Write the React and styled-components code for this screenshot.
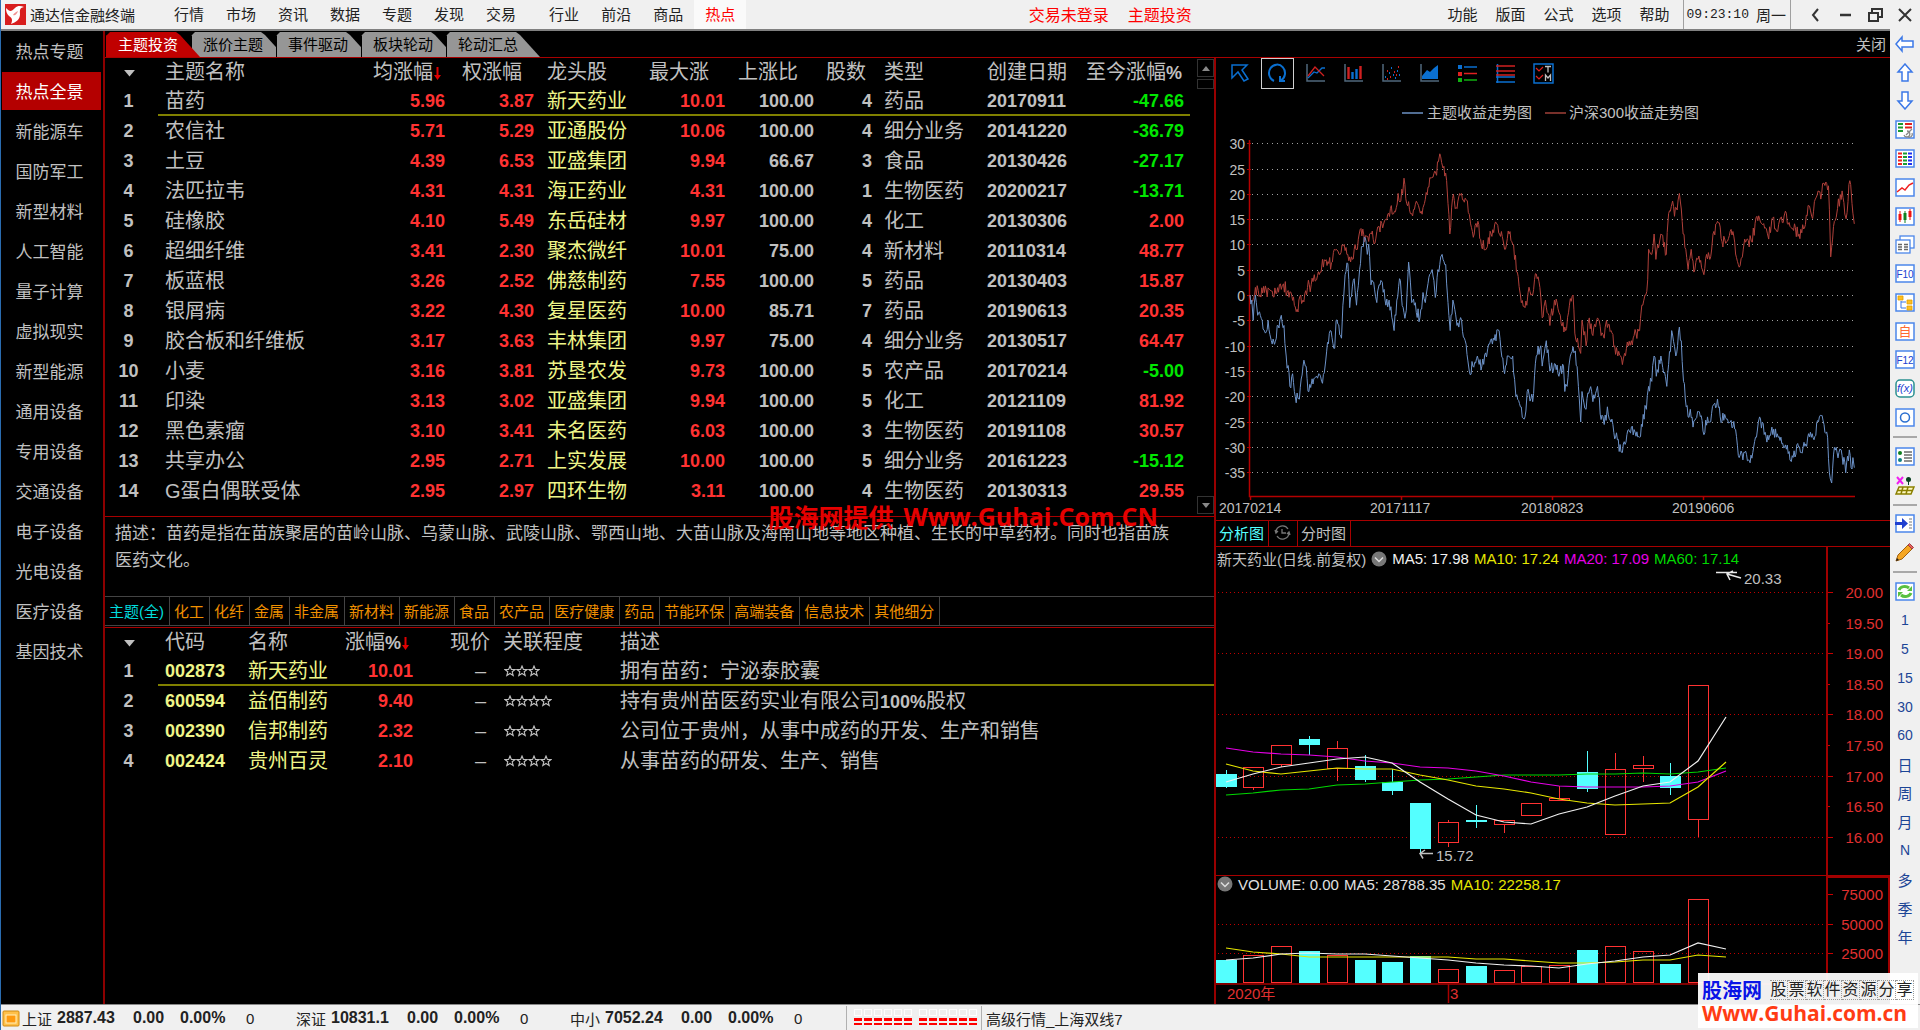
import React from "react";
import styled, { createGlobalStyle } from "styled-components";

const c = {
  bar: "#f0f0f0",
  text: "#c0c0c0",
  line: "#a80000",
  up: "#ff3232",
  down: "#00e600",
  name: "#eef588",
  cyan: "#54ffff",
  blue: "#3b78e7",
  navy: "#1c4596",
};

const sans = `"Liberation Sans", "Noto Sans CJK SC", sans-serif`;

const GlobalStyle = createGlobalStyle`
  *, *::before, *::after { box-sizing: border-box; }
  body { margin: 0; background: #000; font-family: ${sans}; }
  button { font-family: inherit; border: 0; padding: 0; margin: 0; background: none; cursor: pointer; white-space: nowrap; }
  svg { display: block; }
  svg text { font-family: ${sans}; }
`;

const Page = styled.div`
  position: relative;
  display: flex;
  flex-direction: column;
  min-height: 100vh;
  border-left: 1px solid #2a6cb0;
  color: ${c.text};
`;

/* ---------- title bar ---------- */
const TitleBar = styled.header`
  display: flex;
  align-items: stretch;
  height: 29px;
  background: ${c.bar};
  color: #222;
  font-size: 15px;
`;
const Brand = styled.div`
  display: flex;
  align-items: center;
  gap: 4px;
  width: 162px;
  padding-left: 4px;
`;
const Menu = styled.nav`
  display: flex;
  margin-left: ${(p) => (p.$gap ? "11px" : "0")};
`;
const MenuItem = styled.button`
  padding: 0 ${(p) => (p.$tight ? 9 : 11)}px 2px;
  font-size: 15px;
  color: ${(p) => (p.$active ? "#ff0000" : "#222")};
  background: ${(p) => (p.$active ? "#fafafa" : "transparent")};
`;
const Notices = styled.div`
  flex: 1;
  display: flex;
  justify-content: center;
  align-items: center;
  gap: 19px;
  padding: 0 0 2px 36px;
`;
const Notice = styled.a`
  color: #ff0000;
  font-size: 16px;
  text-decoration: none;
`;
const Clock = styled.time`
  display: flex;
  align-items: center;
  gap: 7px;
  margin: 0 9px 0 4px;
  padding: 0 4px 0 3px;
  border-left: 1px solid #a0a0a0;
  border-right: 1px solid #a0a0a0;
  span { font: 13px "Liberation Mono", monospace; }
`;
const WinButton = styled.button`
  width: 30px;
  display: grid;
  place-items: center;
`;

/* ---------- body ---------- */
const Body = styled.div`
  flex: 1;
  display: flex;
`;
const Dark = styled.main`
  flex: 1;
  min-width: 0;
  display: flex;
  background: #000;
  border-top: 2px solid #808080;
`;
const SideNav = styled.nav`
  width: 104px;
  display: flex;
  flex-direction: column;
  border-right: 2px solid #8c0000;
`;
const SideItem = styled.button`
  height: 38px;
  margin: 1px 2px 1px 1px;
  padding: 0 4px 2px 0;
  font-size: 17px;
  color: ${(p) => (p.$active ? "#fff" : c.text)};
  background: ${(p) => (p.$active ? "#b40000" : "transparent")};
`;
const Content = styled.div`
  flex: 1;
  min-width: 0;
  display: flex;
  flex-direction: column;
`;
const TabRow = styled.div`
  display: flex;
  align-items: flex-end;
  height: 27px;
  padding-left: 1px;
  border-bottom: 1px solid ${c.line};
`;
const Tab = styled.button`
  position: relative;
  z-index: ${(p) => (p.$active ? 1 : 0)};
  width: 94px;
  height: 25px;
  margin-right: -9px;
  padding: 0 0 2px 11px;
  text-align: left;
  font-size: 15px;
  color: ${(p) => (p.$active ? "#fff" : "#000")};
  background: ${(p) => (p.$active ? "#c00000" : "#969696")};
  border-left: 1px solid ${(p) => (p.$active ? "#c00000" : "#000")};
  clip-path: polygon(0 4px, 4px 0, 70px 0, 74px 3px, 94px 100%, 0 100%);
`;
const CloseButton = styled.button`
  margin-left: auto;
  align-self: center;
  padding: 0 4px 2px 0;
  font-size: 15px;
  color: ${c.text};
`;
const Split = styled.div`
  flex: 1;
  display: grid;
  grid-template-columns: minmax(0, 1fr) 676px;
`;
const LeftPane = styled.section`
  display: flex;
  flex-direction: column;
`;
const ThemePanel = styled.div`
  display: flex;
  height: 458px;
`;
const TableWrap = styled.div`
  flex: 1;
  min-width: 0;
  padding-right: 7px;
`;
const Scroll = styled.div`
  width: 17px;
  display: flex;
  flex-direction: column;
  padding: 1px 0 2px;
`;
const ScrollButton = styled.button`
  height: 18px;
  border: 1px solid #333;
  color: #777;
  display: grid;
  place-items: center;
  &:last-child { margin-top: auto; }
`;
const Thumb = styled.div`
  height: 10px;
  margin-top: 2px;
  border: 1px solid #333;
`;

const Table = styled.table`
  width: 100%;
  table-layout: fixed;
  border-collapse: separate;
  border-spacing: 0;
  line-height: 20px;
`;
const Cell = styled.td`
  height: 30px;
  padding: ${(p) => p.$pad || "0"};
  text-align: ${(p) => p.$align || "left"};
  font-size: ${(p) => (p.$num ? 18 : 20)}px;
  font-weight: ${(p) => (p.$num ? 700 : 400)};
  color: ${(p) => p.$color || c.text};
  white-space: nowrap;
  box-shadow: ${(p) => (p.$line ? "inset 0 -2px #808000" : "none")};
`;
const Head = styled(Cell).attrs({ as: "th", scope: "col" })`
  height: 28px;
  font-weight: 400;
  b { font-size: 18px; }
`;
const Strong = styled.b`
  font-size: 18px;
`;
const Mark = styled.span`
  display: inline-block;
  vertical-align: middle;
`;
const SortMark = styled(Mark)`
  padding: 0 4px 0 1px;
  svg { width: 7px; height: 15px; }
`;
const Stars = styled.span`
  display: flex;
  svg { width: 12px; height: 12px; }
`;

const Description = styled.p`
  margin: 0;
  height: 80px;
  padding: 3px 40px 0 10px;
  border-top: 1px solid ${c.line};
  font-size: 17px;
  line-height: 27px;
`;
const Filters = styled.div`
  display: flex;
  height: 30px;
  margin-bottom: 1px;
  border: solid #444;
  border-width: 1px 0;
`;
const Filter = styled.button`
  padding: 0 5px 2px 4px;
  border-right: 1px solid #444;
  font-size: 15px;
  color: ${(p) => (p.$active ? "#00dcdc" : "#f09000")};
`;
const StockPanel = styled.div`
  flex: 1;
  border-top: 1px solid ${c.line};
`;

/* ---------- right pane ---------- */
const RightPane = styled.section`
  display: flex;
  flex-direction: column;
  border-left: 2px solid #980000;
`;
const ChartTools = styled.div`
  display: flex;
  gap: 5px;
  height: 32px;
  padding-left: 7px;
`;
const ToolButton = styled.button`
  width: 33px;
  height: 31px;
  display: grid;
  place-items: center;
  border: ${(p) => (p.$active ? "1px solid #d0d0d0" : "0")};
`;
const Canvas = styled.svg`
  width: 100%;
  overflow: visible;
`;
const SubTabs = styled.div`
  display: flex;
  height: 27px;
  border: solid ${c.line};
  border-width: 1px 0;
`;
const SubTab = styled.button`
  padding: 0 4px 2px 3px;
  font-size: 15px;
  border-right: 1px solid ${c.line};
  color: ${(p) => (p.$active ? c.cyan : c.text)};
`;
const IconTab = styled(SubTab)`
  width: 29px;
  display: grid;
  place-items: center;
`;
const LegendRow = styled.div`
  display: flex;
  height: ${(p) => (p.$low ? 17 : 23)}px;
  border-top: ${(p) => (p.$low ? `1px solid ${c.line}` : "0")};
`;
const Legend = styled.div`
  flex: 1;
  display: flex;
  align-items: center;
  gap: 5px;
  padding-left: 1px;
  border-right: 2px solid #a00000;
  font-size: 15px;
  white-space: nowrap;
`;
const AxisGap = styled.div`
  width: 62px;
  border-top: ${(p) => (p.$box ? "2px solid #a00000" : "0")};
`;
const Tint = styled.span`
  color: ${(p) => p.$color};
`;

/* ---------- right toolbar ---------- */
const Rail = styled.aside`
  width: 30px;
  background: ${c.bar};
`;
const RailItems = styled.div`
  display: flex;
  flex-direction: column;
  height: 922px;
`;
const RailButton = styled.button`
  flex: 1;
  display: grid;
  place-items: center;
  font-size: ${(p) => (p.$cjk ? 15 : 14)}px;
  color: ${c.navy};
`;
const Divider = styled.hr`
  width: 24px;
  margin: 4px 3px;
  border: 0;
  border-top: 2px solid #a8a8a8;
`;

/* ---------- status bar ---------- */
const Status = styled.footer`
  display: flex;
  align-items: center;
  height: 26px;
  padding-top: 1px;
  border-top: 1px solid #888;
  background: ${c.bar};
  color: #222;
  font-size: 15px;
`;
const IndexGroup = styled.div`
  display: grid;
  grid-template-columns: 35px 76px 47px 66px 50px;
  align-items: center;
  b { font-size: 16px; }
`;
const Meter = styled.div`
  display: flex;
  gap: 7px;
  height: 24px;
  margin-left: 2px;
  padding: 3px 4px 3px 7px;
  border: solid #b0b0b0;
  border-width: 0 1px;
`;
const MeterHalf = styled.div`
  display: grid;
  grid-template-columns: repeat(6, 8px);
  grid-template-rows: 7px 7px;
  gap: 2px;
`;
const MeterCell = styled.i`
  border: solid ${(p) => (p.$on ? "#ff0000" : "#fff")};
  border-width: ${(p) => (p.$on ? "3px 0 2px" : "1px")};
`;

/* ---------- promo overlays ---------- */
const CenterMark = styled.div`
  position: absolute;
  left: 40%;
  top: 498px;
  display: flex;
  align-items: center;
  gap: 10px;
  font: 700 25px "Open Sans", "Noto Sans CJK SC", sans-serif;
  color: #e60000;
  white-space: nowrap;
`;
const CornerMark = styled.div`
  position: absolute;
  right: 2px;
  bottom: 2px;
  width: 220px;
  padding: 4px;
  background: rgba(255, 255, 255, 0.94);
  white-space: nowrap;
`;
const MarkTop = styled.div`
  display: flex;
  align-items: center;
  justify-content: space-between;
  height: 25px;
  b { font-size: 20px; color: #0a14e6; }
`;
const Boxes = styled.span`
  display: flex;
  span {
    width: 18px;
    height: 20px;
    line-height: 17px;
    text-align: center;
    border: 1px dotted #999;
    border-left-width: 0;
    font-size: 16px;
    color: #222;
  }
`;
const MarkUrl = styled.div`
  font: 700 21px/22px "Open Sans", sans-serif;
  color: #ff3c14;
`;

/* ---------- data ---------- */
const themes = [
  ["苗药", "5.96", "3.87", "新天药业", "10.01", "100.00", "4", "药品", "20170911", "-47.66"],
  ["农信社", "5.71", "5.29", "亚通股份", "10.06", "100.00", "4", "细分业务", "20141220", "-36.79"],
  ["土豆", "4.39", "6.53", "亚盛集团", "9.94", "66.67", "3", "食品", "20130426", "-27.17"],
  ["法匹拉韦", "4.31", "4.31", "海正药业", "4.31", "100.00", "1", "生物医药", "20200217", "-13.71"],
  ["硅橡胶", "4.10", "5.49", "东岳硅材", "9.97", "100.00", "4", "化工", "20130306", "2.00"],
  ["超细纤维", "3.41", "2.30", "聚杰微纤", "10.01", "75.00", "4", "新材料", "20110314", "48.77"],
  ["板蓝根", "3.26", "2.52", "佛慈制药", "7.55", "100.00", "5", "药品", "20130403", "15.87"],
  ["银屑病", "3.22", "4.30", "复星医药", "10.00", "85.71", "7", "药品", "20190613", "20.35"],
  ["胶合板和纤维板", "3.17", "3.63", "丰林集团", "9.97", "75.00", "4", "细分业务", "20130517", "64.47"],
  ["小麦", "3.16", "3.81", "苏垦农发", "9.73", "100.00", "5", "农产品", "20170214", "-5.00"],
  ["印染", "3.13", "3.02", "亚盛集团", "9.94", "100.00", "5", "化工", "20121109", "81.92"],
  ["黑色素瘤", "3.10", "3.41", "未名医药", "6.03", "100.00", "3", "生物医药", "20191108", "30.57"],
  ["共享办公", "2.95", "2.71", "上实发展", "10.00", "100.00", "5", "细分业务", "20161223", "-15.12"],
  ["G蛋白偶联受体", "2.95", "2.97", "四环生物", "3.11", "100.00", "4", "生物医药", "20130313", "29.55"],
];
const stocks = [
  ["002873", "新天药业", "10.01", 3, "拥有苗药：宁泌泰胶囊"],
  ["600594", "益佰制药", "9.40", 4, <>持有贵州苗医药实业有限公司<Strong>100%</Strong>股权</>],
  ["002390", "信邦制药", "2.32", 3, "公司位于贵州，从事中成药的开发、生产和销售"],
  ["002424", "贵州百灵", "2.10", 4, "从事苗药的研发、生产、销售"],
];
const sideItems = ["热点专题", "热点全景", "新能源车", "国防军工", "新型材料", "人工智能", "量子计算", "虚拟现实", "新型能源", "通用设备", "专用设备", "交通设备", "电子设备", "光电设备", "医疗设备", "基因技术"];
const filters = ["主题(全)", "化工", "化纤", "金属", "非金属", "新材料", "新能源", "食品", "农产品", "医疗健康", "药品", "节能环保", "高端装备", "信息技术", "其他细分"];

const hs300 = [0,0,8,-0.5,12,1.5,22,0,32,0.5,47,0.8,57,0.3,67,2.2,74,2.2,82,0.5,92,0,104,-2.8,112,0,117,-1,127,1.5,135,2,142,4,147,3,155,4.5,160,7,170,5.8,182,6.5,190,9,197,8,206,9.7,214,8,222,6.5,230,9,237,9,241,12,260,11.5,278,11.2,285,13.5,302,14.8,310,17,317,16,327,20,333,18.5,340,23,346,18,357,16,370,18,378,16.5,385,18,400,23,410,24,419,27.8,426,25,432,24,437,18,441,12,447,19,457,17,467,20,480,18.5,487,14,495,12,503,14.5,511,9.5,524,9.5,532,12,545,14,555,12.5,562,9,572,12,580,10,590,4.5,597,0,607,-2.5,614,0.5,624,0,630,4.2,640,1.5,645,-4.5,652,-1,662,-6,672,-1,685,-4,697,-7,705,-2,713,0,717,-7.5,730,-11.5,733,-5,742,-10,749,-4.5,757,-8,767,-4.5,775,-8,782,-8.5,787,-5,797,-7,805,-10,812,-12,822,-13.7,827,-11.5,842,-9,852,-7.5,860,-7,865,-2,872,0,878,3,880,9,887,8,892,12,896,7,907,12,919,8,924,16,933,18.5,937,15.5,948,20,954,14.5,962,9,967,5,974,9,980,4.5,989,7,1002,4,1008,8,1015,7,1022,12,1032,14.5,1042,10.5,1052,10.5,1066,12.5,1078,6,1087,7.5,1092,11,1107,10.5,1119,15.5,1130,14,1145,11,1152,15,1163,12.5,1182,16.5,1192,13.5,1212,12,1222,13,1235,17.5,1240,15.5,1254,20.5,1262,20,1267,22,1277,21.5,1282,7.5,1290,14.5,1297,17,1307,20.5,1316,15,1324,22.5,1329,18,1334,14];
const theme = [0,0,4,-1,7,-5,12,0,17,-4,27,-5,34,-7.5,40,-5,47,-9,54,-9.7,62,-6,69,-4,75,-6,80,-12,88,-18,94,-15.5,100,-20,109,-20.5,117,-14,122,-14,130,-19,137,-16.5,152,-15.5,158,-17,167,-13,177,-7,187,-10.5,190,-5,202,-8.5,205,-2,210,4,216,6.2,220,-2.5,230,3.2,235,-2,242,5,246,9.5,250,9.5,254,11.3,259,8,262,10,267,2,275,1,280,-1.5,285,2,292,2.5,300,-2,307,-1,318,-7,324,-1,330,3.2,340,-3.5,345,-3,350,6.5,357,-1.5,363,-2,375,-4.5,382,0.5,387,-1.5,395,3.5,402,5,409,-0.5,415,5,424,8,432,6,437,-1.5,442,-7,448,-1,457,-6,467,-5,475,-9,484,-15,492,-14,502,-12,512,-14,525,-10.5,537,-8.5,550,-7,562,-15.5,570,-12,580,-12,587,-20,597,-22,607,-24,612,-19,624,-21,632,-12,642,-10,645,-14,654,-9,662,-15,672,-13.5,682,-16,692,-14,695,-19,700,-18,707,-12,718,-11,725,-18,730,-25,733,-19,742,-22.5,750,-18.5,757,-21,767,-18,775,-24.5,782,-25.5,789,-22,797,-25,807,-28,822,-31,832,-27.5,842,-26,850,-27,860,-28,868,-23.5,875,-22.5,880,-18,887,-17,892,-12,897,-16,907,-12,920,-18,931,-7,940,-12,948,-6.3,952,-9,957,-17,963,-22,967,-24,972,-22.5,978,-26,992,-23,1002,-27.5,1010,-24,1015,-25,1024,-21.5,1032,-20.5,1038,-24,1048,-23.5,1060,-25,1072,-26.5,1080,-32,1090,-31,1100,-32.5,1110,-31,1118,-28,1125,-24,1137,-27,1145,-28.5,1152,-26,1162,-28,1172,-28,1182,-29.5,1195,-32.8,1207,-29.5,1217,-31,1237,-27,1245,-28.5,1257,-24,1267,-25.5,1275,-28,1279,-35,1284,-37,1290,-30,1300,-31,1305,-30.5,1315,-35,1323,-30.5,1327,-34,1331,-32,1334,-34];

/* daily points between the turning points, with a small repeatable wobble */
function daily(series, seed) {
  const pts = [];
  let s = seed;
  for (let i = 0; i + 3 < series.length; i += 2) {
    const [t0, v0, t1, v1] = series.slice(i, i + 4);
    pts.push([t0, v0]);
    for (let t = t0 + 2; t < t1 - 1; t += 2) {
      s = (s * 16807) % 2147483647;
      const wobble = (s / 2147483647 - 0.5) * 2.6;
      pts.push([t, v0 + ((v1 - v0) * (t - t0)) / (t1 - t0) + wobble]);
    }
  }
  pts.push(series.slice(-2));
  return pts.map(([t, v]) => `${(34 + t * 0.453).toFixed(1)},${(205 - v * 5.08).toFixed(1)}`).join(" ");
}

function IncomeChart() {
  const levels = [30, 25, 20, 15, 10, 5, 0, -5, -10, -15, -20, -25, -30, -35];
  const dates = ["20170214", "20171117", "20180823", "20190606"];
  return (
    <Canvas viewBox="0 0 674 430" role="img" aria-label="主题收益走势图">
      <path d="M186 23h21" stroke="#6c92c4" strokeWidth="1.5" />
      <text x="211" y="28" fontSize="15" fill={c.text}>主题收益走势图</text>
      <path d="M329 23h21" stroke="#a04038" strokeWidth="1.5" />
      <text x="353" y="28" fontSize="15" fill={c.text}>沪深300收益走势图</text>
      {levels.map((v) => {
        const y = Math.round(205 - v * 5.06) + 0.5;
        return (
          <g key={v}>
            <path d={`M36 ${y}H637`} stroke="#a0a0a0" strokeDasharray="1 4" />
            <path d={`M31 ${y}h4`} stroke={c.line} />
            <text x="29" y={y + 5} fontSize="14" textAnchor="end" fill={c.text}>{v}</text>
          </g>
        );
      })}
      <path d="M33.5 50V406.5H639" fill="none" stroke="#b40000" strokeWidth="1.5" />
      {dates.map((d, i) => (
        <g key={d}>
          <path d={`M${34.5 + i * 151} 406v4`} stroke="#b40000" strokeWidth="1.5" />
          <text x={3 + i * 151} y="423" fontSize="14" fill={c.text}>{d}</text>
        </g>
      ))}
      <polyline points={daily(hs300, 77)} fill="none" stroke="#b0403a" strokeWidth="1" />
      <polyline points={daily(theme, 501)} fill="none" stroke="#6c92c8" strokeWidth="1" />
    </Canvas>
  );
}

/* direction, body top, body bottom, wick top, wick bottom, volume bar top */
const candles = [
  ["d", 204, 217, 200, 218, 68], ["u", 197, 217, 197, 220, 63], ["u", 175, 194, 175, 197, 54],
  ["d", 169, 175, 166, 185, 59], ["u", 178, 198, 171, 211, 63], ["d", 196, 210, 185, 212, 68],
  ["d", 212, 221, 199, 225, 70], ["d", 233, 279, 233, 283, 64], ["u", 252, 272, 250, 277, 77],
  ["d", 250, 252, 235, 258, 74], ["u", 250, 254, 250, 263, 78], ["u", 233, 245, 233, 245, 74],
  ["u", 228, 230, 216, 230, 73], ["d", 202, 219, 181, 222, 58], ["u", 199, 264, 183, 264, 54],
  ["u", 195, 198, 186, 212, 59], ["d", 206, 218, 193, 225, 72], ["u", 115, 249, 115, 267, 7],
];
const cx = (i) => Math.round(9.5 + i * 27.8);
const trend = (ys) => ys.map((y, i) => `${cx(i)},${y}`).join(" ");
const priceMa = [
  ["#00d800", [225, 223, 220, 219, 215, 214, 212, 210, 209, 207, 205, 205, 205, 204, 204, 203, 204, 202, 198]],
  ["#e600e6", [178, 182, 184, 185, 187, 191, 193, 197, 198, 201, 206, 212, 216, 217, 217, 217, 216, 212, 201]],
  ["#e6e600", [194, 201, 204, 201, 198, 199, 199, 205, 210, 216, 219, 223, 229, 233, 235, 234, 233, 217, 192]],
  ["#f0f0f0", [212, 204, 197, 193, 189, 187, 193, 212, 229, 245, 252, 254, 244, 237, 226, 216, 212, 191, 147]],
];
const volumeMa = [
  ["#e6e600", [56, 60, 62, 65, 65, 65, 65, 65, 65, 67, 67, 69, 71, 71, 70, 68, 68, 63, 65]],
  ["#f0f0f0", [68, 66, 62, 61, 62, 62, 64, 66, 68, 71, 73, 74, 76, 72, 69, 65, 63, 51, 57]],
];

function PriceChart() {
  const marks = ["20.00", "19.50", "19.00", "18.50", "18.00", "17.50", "17.00", "16.50", "16.00"];
  return (
    <Canvas viewBox="0 0 674 305" role="img" aria-label="新天药业日线">
      {marks.map((m, i) => {
        const y = Math.round(22 + i * 30.6) + 0.5;
        return (
          <g key={m}>
            {i % 2 === 0 && <path d={`M2 ${y}H610`} stroke="#c00000" strokeDasharray="1 3" />}
            <path d={`M611 ${y}h${i % 2 ? 3 : 6}`} stroke="#c80000" />
            <text x="667" y={y + 5} fontSize="15" textAnchor="end" fill="#e03030">{m}</text>
          </g>
        );
      })}
      <path d="M611 0V305" stroke="#a00000" strokeWidth="2" />
      {candles.map(([dir, top, bottom, high, low], i) =>
        dir === "d" ? (
          <g key={i}>
            <path d={`M${cx(i)}.5 ${high}V${low}`} stroke={c.cyan} />
            <rect x={cx(i) - 10} y={top} width="21" height={bottom - top} fill={c.cyan} />
          </g>
        ) : (
          <g key={i} fill="none" stroke={c.up}>
            <path d={`M${cx(i)}.5 ${high}V${top}M${cx(i)}.5 ${bottom}V${low}`} />
            <rect x={cx(i) - 9.5} y={top + 0.5} width="20" height={bottom - top} />
          </g>
        )
      )}
      {priceMa.map(([color, ys]) => (
        <polyline key={color} points={trend(ys)} fill="none" stroke={color} strokeWidth="1.2" />
      ))}
      <path d="M500 2.5H521M525 8l-14-4M517 1l-6 3 3 6" fill="none" stroke="#e8e8e8" strokeWidth="1.5" />
      <text x="528" y="14" fontSize="15" fill={c.text}>20.33</text>
      <path d="M204 283.5h13M209 280l-5 3.5 3 5" fill="none" stroke={c.text} strokeWidth="1.5" />
      <text x="220" y="291" fontSize="15" fill={c.text}>15.72</text>
    </Canvas>
  );
}

function VolumeChart() {
  return (
    <Canvas viewBox="0 0 674 111" role="img" aria-label="成交量">
      {[["75000", 2], ["50000", 32], ["25000", 61]].map(([m, y]) => (
        <g key={m}>
          {y > 10 && <path d={`M2 ${y}.5H610`} stroke="#c00000" strokeDasharray="1 3" />}
          <path d={`M611 ${y}.5h6`} stroke="#c80000" />
          <text x="667" y={y + 6} fontSize="15" textAnchor="end" fill="#e03030">{m}</text>
        </g>
      ))}
      <path d="M611 0V111" stroke="#a00000" strokeWidth="2" />
      <path d="M673 -16V92" stroke="#a00000" strokeWidth="2" />
      {candles.map(([dir, , , , , top], i) =>
        dir === "d" ? (
          <rect key={i} x={cx(i) - 10} y={top} width="21" height={91 - top} fill={c.cyan} />
        ) : (
          <rect key={i} x={cx(i) - 9.5} y={top + 0.5} width="20" height={90 - top} fill="none" stroke={c.up} />
        )
      )}
      {volumeMa.map(([color, ys]) => (
        <polyline key={color} points={trend(ys)} fill="none" stroke={color} strokeWidth="1.2" />
      ))}
      <path d="M0 92H674" stroke="#a80000" strokeWidth="1.5" />
      <path d="M232.5 92V111" stroke="#a80000" strokeWidth="1.5" />
      <text x="11" y="107" fontSize="15" fill="#e03030">2020年</text>
      <text x="234" y="107" fontSize="15" fill="#e03030">3</text>
    </Canvas>
  );
}

/* ---------- icons ---------- */
const Chevron = () => (
  <svg width="16" height="16" viewBox="0 0 16 16">
    <circle cx="8" cy="8" r="7.5" fill="#777" />
    <path d="M4 6.5l4 4 4-4" fill="none" stroke="#ddd" strokeWidth="1.5" />
  </svg>
);
const Star = () => (
  <svg viewBox="0 0 12 12">
    <path d="M6 1l1.4 3.4 3.6.1-2.8 2.3 1 3.7L6 8.5 2.800 10.5l1-3.700L1 4.5l3.600-.1z" fill="none" stroke={c.text} strokeWidth="1.1" />
  </svg>
);
const chartAxes = <path d="M2 1v17h18" fill="none" stroke="#50687c" strokeWidth="1.5" />;
const B = "#0a6fd0";
const toolIcons = [
  <path d="M3 2h15l-5 5 6 9-4 2-6-9-6 6z" fill="none" stroke={B} strokeWidth="1.5" />,
  <path d="M7 18a8 8.5 0 1 1 7-.5M18 18h-5v-5" fill="none" stroke={B} strokeWidth="2" />,
  <>{chartAxes}<path d="M3 15l6-6 3 1 5-5h3" fill="none" stroke={B} strokeWidth="1.3" /><path d="M3 13l7-9 9 9" fill="none" stroke="#d02020" strokeWidth="1.3" /></>,
  <>{chartAxes}<path d="M5.5 16V4M17.5 16V3" stroke="#d02020" strokeWidth="2.4" /><path d="M9.5 16V9M13.5 16V6" stroke={B} strokeWidth="2.4" /></>,
  <>{chartAxes}<path d="M4 14h1M8 10h1M12 12h1M16 8h1M10 5h1M14 15h1M18 12h1" stroke={B} strokeWidth="2" /><path d="M6 8h1M9 14h1M13 9h1M17 4h1M6 16h1M15 12h1" stroke="#d02020" strokeWidth="2" /></>,
  <>{chartAxes}<path d="M3 16v-3l5-6 3 2 4-4 4-3v14z" fill={B} /></>,
  <><path d="M7 4h13" stroke={B} strokeWidth="1.5" /><path d="M1 2h4v4H1z" fill={B} /><path d="M7 10.5h13" stroke="#e02020" strokeWidth="1.5" /><path d="M1 9h4v4H1z" fill="#e02020" /><path d="M7 17h13" stroke="#10b010" strokeWidth="1.5" /><path d="M1 15h4v4H1z" fill="#10b010" /></>,
  <><path d="M2.5 1v19M1 19h19M1 14h19" stroke={B} strokeWidth="1.5" /><path d="M1 3h19M1 8h19M1 12h19" stroke="#d02020" strokeWidth="1.5" /></>,
  <><path d="M1 1h19v19H1z" fill="none" stroke={B} strokeWidth="1.500" /><path d="M3 5l3 3 4-4M3 13l3 3 4-4" fill="none" stroke="#e02020" strokeWidth="1.2" /><path d="M12 3.500h6M15 3.500v6M12.500 18v-6l2.500 3 2.500-3v6" fill="none" stroke="#c0c0c0" strokeWidth="1.300" /></>,
];
const frame = <rect x="1" y="1" width="18" height="17" fill="#fff" stroke="#4b86ea" strokeWidth="1.5" />;
const label = (t, color, size) => (
  <text x="10" y="14" fontSize={size} textAnchor="middle" fill={color}>{t}</text>
);
const railIcons = [
  ["后退", <path d="M1 10l6-7v4h11v6H7v4z" fill="#fff" stroke={c.blue} strokeWidth="1.5" />],
  ["向上", <path d="M10 1l7 8h-4v9H7V9H3z" fill="#fff" stroke={c.blue} strokeWidth="1.5" />],
  ["向下", <path d="M10 18l7-8h-4V1H7v9H3z" fill="#fff" stroke={c.blue} strokeWidth="1.5" />],
  ["选股", <>{frame}<path d="M3 4h5M3 7.5h5M3 11h5" stroke="#1a9a30" strokeWidth="2" /><path d="M10 4h7M10 7.5h7" stroke="#e02020" strokeWidth="2" /><path d="M9 15a3 3 0 1 0 3-4M11 15l6-6M13 17a3 3 0 0 0 4-4" fill="none" stroke="#888" strokeWidth="1.3" /></>],
  ["报价", <>{frame}<path d="M3 4.5h4M3 8h4M3 11.5h4M3 15h4" stroke="#f02020" strokeWidth="2" /><path d="M8 4.5h4M8 8h4M8 11.5h4M8 15h4" stroke="#1a9a30" strokeWidth="2" /><path d="M13 4.5h4M13 8h4M13 11.5h4M13 15h4" stroke="#2030f0" strokeWidth="2" /></>],
  ["分时", <>{frame}<path d="M2 14l5-4 3 2 4-5 4-2" fill="none" stroke="#f02020" strokeWidth="1.5" /></>],
  ["K线", <>{frame}<path d="M5 4v11M15 2v11" stroke="#f01010" /><path d="M3.5 7h3v6h-3zM13.5 4h3v6h-3z" fill="#f01010" /><path d="M10 4v12" stroke="#108020" /><path d="M8.5 6h3v7h-3z" fill="#108020" /></>],
  ["多窗", <><rect x="5" y="1" width="14" height="12" fill="#fff" stroke="#4b86ea" strokeWidth="1.3" /><rect x="1" y="5" width="14" height="13" fill="#fff" stroke="#4b86ea" strokeWidth="1.3" /><path d="M3 9.5h4M9 9.5h4M3 12h4M9 12h4M3 14.5h4M9 14.5h4" stroke="#666" strokeWidth="1.3" /></>],
  ["F10", <>{frame}{label("F10", "#2040d0", 10)}</>],
  ["板块树", <>{frame}<path d="M3 3h5v4H3zM12 7h5v4h-5zM12 13h5v4h-5z" fill="#ffc020" stroke="#e0a000" strokeWidth=".8" /><path d="M6 8v7h5M6 9h5" fill="none" stroke="#3b78e7" /></>],
  ["自选", <>{frame}{label("自", "#ff6a30", 13)}</>],
  ["F12", <>{frame}{label("F12", "#2040d0", 10)}</>],
  ["公式", <><rect x="1" y="1" width="18" height="17" rx="4" fill="#fff" stroke="#2a9090" strokeWidth="1.5" /><text x="10" y="13" fontSize="11" fontStyle="italic" textAnchor="middle" fill="#2040d0">f(x)</text></>],
  ["刷新", <>{frame}<circle cx="10" cy="9.5" r="4.5" fill="none" stroke="#2a6fd0" strokeWidth="1.5" /></>],
  null,
  ["列表", <>{frame}<path d="M9 5h8M9 8h8M9 11h8M9 14h8" stroke="#222" strokeWidth="1.2" /><circle cx="5" cy="6" r="2" fill="#108020" /><circle cx="5" cy="13" r="2" fill="#108080" /></>],
  ["计算", <><path d="M2 1l6 7M8 1l-6 7" stroke="#f020f0" strokeWidth="2" /><circle cx="13.5" cy="3.5" r="2.5" fill="#084020" /><path d="M13.5 5v4" stroke="#084020" /><path d="M4 11h15l-3 7H1zM3 14.5h14M8 11l-2 7M13 11l-2 7" fill="#fff8c0" stroke="#8a8000" strokeWidth="1.5" /></>],
  null,
  ["跳转", <>{frame}<path d="M0 8h7V4l6 5.5-6 5.5v-4H0z" fill="#2040d0" /><path d="M14 5h3M14 8h3M14 11h3M14 14h3" stroke="#777" /></>],
  ["画线", <><path d="M1 18l2-6L13 2l4 4L7 16z" fill="#f5a623" stroke="#a06010" /><path d="M13 2l1.5-1.5 4 4L17 6z" fill="#e86060" stroke="#a04040" /><path d="M1 18l1-3 2 2z" fill="#222" /></>],
  null,
  ["循环", <>{frame}<path d="M4 8a6 5 0 0 1 10-2M16 11a6 5 0 0 1-10 2" fill="none" stroke="#58c040" strokeWidth="3" /><path d="M12 9h5V4zM8 10H3v5z" fill="#58c040" /></>],
];
const periods = ["1", "5", "15", "30", "60", "日", "周", "月", "N", "多", "季", "年"];

const signColor = (v) => (v.startsWith("-") ? c.down : c.up);
const Triangle = ({ up, size = 11, fill = c.text }) => (
  <svg width={size} height={size / 2 + 1} viewBox="0 0 10 6">
    <path d={up ? "M0 6l5-6 5 6z" : "M0 0h10L5 6z"} fill={fill} />
  </svg>
);
const SortDown = () => (
  <SortMark>
    <svg viewBox="0 0 7 15">
      <path d="M2.500 1h2v8H7L3.500 14 0 9h2.500z" fill="#e00000" />
    </svg>
  </SortMark>
);

function ThemeTable() {
  return (
    <Table>
      <colgroup>
        <col style={{ width: 53 }} /><col />
        {[73, 89, 106, 85, 89, 58, 103, 100, 115].map((w, i) => <col key={i} style={{ width: w }} />)}
      </colgroup>
      <thead>
        <tr>
          <Head $align="center" $pad="0 4px 0 0"><Mark><Triangle /></Mark></Head>
          <Head $pad="0 0 0 7px">主题名称</Head>
          <Head $align="right">均涨幅<SortDown /></Head>
          <Head $align="right" $pad="0 12px 0 0">权涨幅</Head>
          <Head $pad="0 0 0 13px">龙头股</Head>
          <Head $align="right" $pad="0 16px 0 0">最大涨</Head>
          <Head $align="right" $pad="0 16px 0 0">上涨比</Head>
          <Head $align="right" $pad="0 6px 0 0">股数</Head>
          <Head $pad="0 0 0 12px">类型</Head>
          <Head $pad="0 0 0 12px">创建日期</Head>
          <Head $align="right" $pad="0 8px 0 0">至今涨幅<b>%</b></Head>
        </tr>
      </thead>
      <tbody>
        {themes.map((r, i) => {
          const line = i === 0;
          return (
            <tr key={r[0]}>
              <Cell $num $align="center" $pad="0 6px 0 0">{i + 1}</Cell>
              <Cell $line={line} $pad="0 0 0 7px">{r[0]}</Cell>
              <Cell $line={line} $num $align="right" $color={c.up}>{r[1]}</Cell>
              <Cell $line={line} $num $align="right" $color={c.up}>{r[2]}</Cell>
              <Cell $line={line} $pad="0 0 0 13px" $color={c.name}>{r[3]}</Cell>
              <Cell $line={line} $num $align="right" $color={c.up}>{r[4]}</Cell>
              <Cell $line={line} $num $align="right">{r[5]}</Cell>
              <Cell $line={line} $num $align="right">{r[6]}</Cell>
              <Cell $line={line} $pad="0 0 0 12px">{r[7]}</Cell>
              <Cell $line={line} $num $pad="0 0 0 12px">{r[8]}</Cell>
              <Cell $line={line} $num $align="right" $pad="0 6px 0 0" $color={signColor(r[9])}>{r[9]}</Cell>
            </tr>
          );
        })}
      </tbody>
    </Table>
  );
}

function StockTable() {
  return (
    <Table>
      <colgroup>
        {[53, 83, 99, 73, 77, 123].map((w, i) => <col key={i} style={{ width: w }} />)}<col />
      </colgroup>
      <thead>
        <tr>
          <Head $align="center" $pad="0 4px 0 0"><Mark><Triangle /></Mark></Head>
          <Head $pad="0 0 0 7px">代码</Head>
          <Head $pad="0 0 0 7px">名称</Head>
          <Head $align="right">涨幅<b>%</b><SortDown /></Head>
          <Head $align="right">现价</Head>
          <Head $pad="0 0 0 13px">关联程度</Head>
          <Head $pad="0 0 0 7px">描述</Head>
        </tr>
      </thead>
      <tbody>
        {stocks.map(([code, name, pct, stars, desc], i) => {
          const line = i === 0;
          return (
            <tr key={code}>
              <Cell $num $align="center" $pad="0 6px 0 0">{i + 1}</Cell>
              <Cell $line={line} $num $pad="0 0 0 7px" $color={c.name}>{code}</Cell>
              <Cell $line={line} $pad="0 0 0 7px" $color={c.name}>{name}</Cell>
              <Cell $line={line} $num $align="right" $color={c.up}>{pct}</Cell>
              <Cell $line={line} $align="right" $pad="0 4px 0 0">–</Cell>
              <Cell $line={line} $pad="0 0 0 14px">
                <Stars>{Array.from({ length: stars }, (_, k) => <Star key={k} />)}</Stars>
              </Cell>
              <Cell $line={line} $pad="0 0 0 7px">{desc}</Cell>
            </tr>
          );
        })}
      </tbody>
    </Table>
  );
}

export default function App() {
  return (
    <Page>
      <GlobalStyle />
      <TitleBar>
        <Brand>
          <svg width="21" height="21" viewBox="0 0 21 21">
            <rect width="21" height="21" fill="#d81e1e" />
            <path d="M1 4c4 4 5 4 9 0 3-3 6-2 9-1-5 1-4 4-4 7 0 6-4 8-9 10 2-4 1-6-2-8C2 10 1 8 1 4z" fill="#fff" />
            <path d="M8 11c2 1 4-1 5-4-2 1-4 2-5 4z" fill="#f09090" />
          </svg>
          通达信金融终端
        </Brand>
        <Menu>
          {["行情", "市场", "资讯", "数据", "专题", "发现", "交易"].map((m) => <MenuItem key={m}>{m}</MenuItem>)}
        </Menu>
        <Menu $gap>
          {["行业", "前沿", "商品", "热点"].map((m) => <MenuItem key={m} $active={m === "热点"}>{m}</MenuItem>)}
        </Menu>
        <Notices>
          <Notice href="#login">交易未登录</Notice>
          <Notice href="#theme">主题投资</Notice>
        </Notices>
        <Menu>
          {["功能", "版面", "公式", "选项", "帮助"].map((m) => <MenuItem key={m} $tight>{m}</MenuItem>)}
        </Menu>
        <Clock><span>09:23:10</span>周一</Clock>
        <WinButton aria-label="返回"><svg width="16" height="16"><path d="M11 2L6 8l5 6" fill="none" stroke="#333" strokeWidth="2" /></svg></WinButton>
        <WinButton aria-label="最小化"><svg width="16" height="16"><path d="M3 8h11" stroke="#333" strokeWidth="2.5" /></svg></WinButton>
        <WinButton aria-label="还原"><svg width="16" height="16"><path d="M5 5V2h10v8h-4M2 6h9v8H2z" fill="none" stroke="#333" strokeWidth="2" /></svg></WinButton>
        <WinButton aria-label="退出"><svg width="16" height="16"><path d="M2 2l12 12M14 2L2 14" stroke="#333" strokeWidth="2" /></svg></WinButton>
      </TitleBar>

      <Body>
        <Dark>
          <SideNav>
            {sideItems.map((s) => <SideItem key={s} $active={s === "热点全景"}>{s}</SideItem>)}
          </SideNav>
          <Content>
            <TabRow>
              {["主题投资", "涨价主题", "事件驱动", "板块轮动", "轮动汇总"].map((t, i) => <Tab key={t} $active={i === 0}>{t}</Tab>)}
              <CloseButton>关闭</CloseButton>
            </TabRow>
            <Split>
              <LeftPane>
                <ThemePanel>
                  <TableWrap><ThemeTable /></TableWrap>
                  <Scroll>
                    <ScrollButton aria-label="上翻"><Triangle up size={8} fill="#888" /></ScrollButton>
                    <Thumb />
                    <ScrollButton aria-label="下翻"><Triangle size={8} fill="#888" /></ScrollButton>
                  </Scroll>
                </ThemePanel>
                <Description>
                  描述：苗药是指在苗族聚居的苗岭山脉、乌蒙山脉、武陵山脉、鄂西山地、大苗山脉及海南山地等地区种植、生长的中草药材。同时也指苗族医药文化。
                </Description>
                <Filters>
                  {filters.map((f, i) => <Filter key={f} $active={i === 0}>{f}</Filter>)}
                </Filters>
                <StockPanel><StockTable /></StockPanel>
              </LeftPane>

              <RightPane>
                <ChartTools>
                  {toolIcons.map((icon, i) => (
                    <ToolButton key={i} $active={i === 1} aria-label={`图表工具${i + 1}`}>
                      <svg width="21" height="21" viewBox="0 0 21 21">{icon}</svg>
                    </ToolButton>
                  ))}
                </ChartTools>
                <IncomeChart />
                <SubTabs>
                  <SubTab $active>分析图</SubTab>
                  <IconTab aria-label="周期">
                    <svg width="17" height="17" viewBox="0 0 17 17" fill="none" stroke="#777" strokeWidth="1.3">
                      <path d="M2 8a6.5 6.5 0 0 1 12-3M15 9a6.5 6.5 0 0 1-12 3M8 5v4h4M1 6l1 3 2-2M16 11l-1-3-2 2" />
                    </svg>
                  </IconTab>
                  <SubTab>分时图</SubTab>
                </SubTabs>
                <LegendRow>
                  <Legend>
                    <span>新天药业(日线.前复权)</span>
                    <Chevron />
                    <Tint $color="#f0f0f0">MA5: 17.98</Tint>
                    <Tint $color="#e6e600">MA10: 17.24</Tint>
                    <Tint $color="#e600e6">MA20: 17.09</Tint>
                    <Tint $color="#00d800">MA60: 17.14</Tint>
                  </Legend>
                  <AxisGap />
                </LegendRow>
                <PriceChart />
                <LegendRow $low>
                  <Legend>
                    <Chevron />
                    <Tint $color="#e0e0e0">VOLUME: 0.00</Tint>
                    <Tint $color="#e0e0e0">MA5: 28788.35</Tint>
                    <Tint $color="#e6e600">MA10: 22258.17</Tint>
                  </Legend>
                  <AxisGap $box />
                </LegendRow>
                <VolumeChart />
              </RightPane>
            </Split>
          </Content>
        </Dark>
        <Rail>
          <RailItems>
            {railIcons.map((item, i) =>
              item ? (
                <RailButton key={i} aria-label={item[0]}>
                  <svg width="20" height="19" viewBox="0 0 20 19">{item[1]}</svg>
                </RailButton>
              ) : (
                <Divider key={i} />
              )
            )}
            {periods.map((p) => <RailButton key={p} $cjk={/[^\dN]/.test(p)}>{p}</RailButton>)}
          </RailItems>
        </Rail>
      </Body>

      <Status>
        <svg width="21" height="17" viewBox="0 0 21 17">
          <rect x="2" y="1" width="16" height="15" rx="1" fill="#ffc04a" stroke="#d08a10" />
          <rect x="5" y="5" width="10" height="8" fill="#ff9a10" stroke="#fff2c0" />
        </svg>
        {[["上证", "2887.43"], ["深证", "10831.1"], ["中小", "7052.24"]].map(([n, v]) => (
          <IndexGroup key={n}>
            <span>{n}</span><b>{v}</b><b>0.00</b><b>0.00%</b><span>0</span>
          </IndexGroup>
        ))}
        <Meter>
          {[0, 1].map((k) => (
            <MeterHalf key={k}>
              {Array.from({ length: 12 }, (_, j) => <MeterCell key={j} $on={j > 5} />)}
            </MeterHalf>
          ))}
        </Meter>
        <Brand as="span">高级行情_上海双线7</Brand>
      </Status>

      <CenterMark><span>股海网提供</span><span>Www.Guhai.Com.CN</span></CenterMark>
      <CornerMark>
        <MarkTop>
          <b>股海网</b>
          <Boxes>{[..."股票软件资源分享"].map((ch) => <span key={ch}>{ch}</span>)}</Boxes>
        </MarkTop>
        <MarkUrl>Www.Guhai.com.cn</MarkUrl>
      </CornerMark>
    </Page>
  );
}
